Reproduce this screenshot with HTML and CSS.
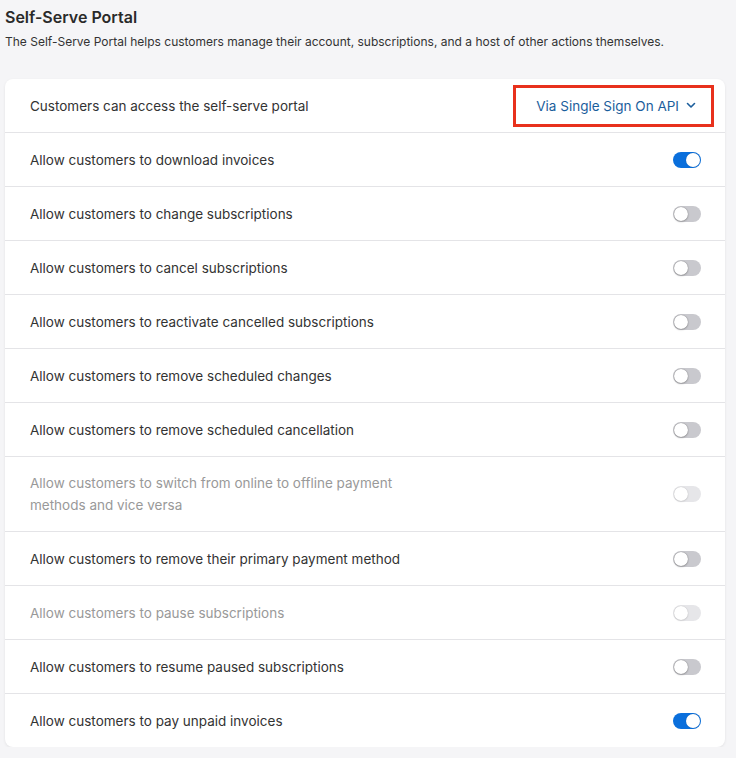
FILE: index.html
```html
<!DOCTYPE html>
<html>
<head>
<meta charset="utf-8">
<link rel="stylesheet" href="styles.css">
</head>
<body>
<div class="page">
  <h1 class="title">Self-Serve Portal</h1>
  <p class="desc">The Self-Serve Portal helps customers manage their account, subscriptions, and a host of other actions themselves.</p>
  <div class="card">
    <div class="row">
      <span class="label">Customers can access the self-serve portal</span>
      <div class="select-box">
        <span class="select">Via Single Sign On API
          <svg class="chev" width="10" height="7" viewBox="0 0 10 7"><path d="M1.5 1.5 L5 5 L8.5 1.5" fill="none" stroke="#1b5e9c" stroke-width="1.6" stroke-linecap="round" stroke-linejoin="round"/></svg>
        </span>
      </div>
    </div>
    <div class="row"><span class="label">Allow customers to download invoices</span><span class="toggle on"></span></div>
    <div class="row"><span class="label">Allow customers to change subscriptions</span><span class="toggle"></span></div>
    <div class="row"><span class="label">Allow customers to cancel subscriptions</span><span class="toggle"></span></div>
    <div class="row"><span class="label">Allow customers to reactivate cancelled subscriptions</span><span class="toggle"></span></div>
    <div class="row"><span class="label">Allow customers to remove scheduled changes</span><span class="toggle"></span></div>
    <div class="row"><span class="label">Allow customers to remove scheduled cancellation</span><span class="toggle"></span></div>
    <div class="row tall disabled"><span class="label narrow">Allow customers to switch from online to offline payment methods and vice versa</span><span class="toggle"></span></div>
    <div class="row"><span class="label">Allow customers to remove their primary payment method</span><span class="toggle"></span></div>
    <div class="row disabled"><span class="label">Allow customers to pause subscriptions</span><span class="toggle"></span></div>
    <div class="row"><span class="label">Allow customers to resume paused subscriptions</span><span class="toggle"></span></div>
    <div class="row"><span class="label">Allow customers to pay unpaid invoices</span><span class="toggle on"></span></div>
  </div>
</div>
</body>
</html>
```
FILE: styles.css
```css
html, body {
  margin: 0;
  padding: 0;
  background: #f5f5f7;
}
body {
  font-family: Inter, "Noto Sans", sans-serif;
  color: #333;
}
.page {
  padding: 7px 11px 0 5px;
}
.title {
  margin: 0;
  font-size: 16px;
  font-weight: 600;
  line-height: 20px;
  color: #2a2a2a;
}
.desc {
  margin: 8px 0 0 0;
  font-size: 12px;
  line-height: 14px;
  color: #333;
}
.card {
  margin-top: 30px;
  background: #fff;
  border-radius: 8px;
  box-shadow: 0 1px 3px rgba(0,0,0,0.08);
}
.row {
  display: flex;
  align-items: center;
  justify-content: space-between;
  height: 53px;
  padding: 0 24px 0 25px;
  border-bottom: 1px solid #e4e4e7;
}
.row:last-child {
  border-bottom: none;
}
.row.tall {
  height: 74px;
}
.label {
  font-size: 13.5px;
  line-height: 22px;
  color: #333;
}
.label.narrow {
  max-width: 380px;
}
.disabled .label {
  color: #999;
}
.select-box {
  border: 3.5px solid #e8311c;
  width: 201px;
  height: 42px;
  display: flex;
  align-items: center;
  justify-content: flex-end;
  padding-right: 15px;
  margin-right: -13px;
  box-sizing: border-box;
}
.select {
  color: #1b5e9c;
  font-size: 13.5px;
  display: flex;
  align-items: center;
  gap: 7px;
}
.toggle {
  position: relative;
  width: 28px;
  height: 16px;
  border-radius: 8px;
  background: #c9c9ce;
}
.toggle::after {
  content: "";
  position: absolute;
  left: 1px;
  top: 1px;
  width: 14px;
  height: 14px;
  border-radius: 50%;
  background: #fff;
  box-shadow: 0 0 1px rgba(0,0,0,0.5), 0 1px 2px rgba(0,0,0,0.2);
}
.toggle.on {
  background: #0a6fdc;
}
.toggle.on::after {
  left: 13px;
  box-shadow: 0 0 1px rgba(0,0,0,0.3);
}
.disabled .toggle {
  background: #e6e6e9;
}
.disabled .toggle::after {
  box-shadow: 0 0 1px rgba(0,0,0,0.25), 0 1px 2px rgba(0,0,0,0.08);
}
```
